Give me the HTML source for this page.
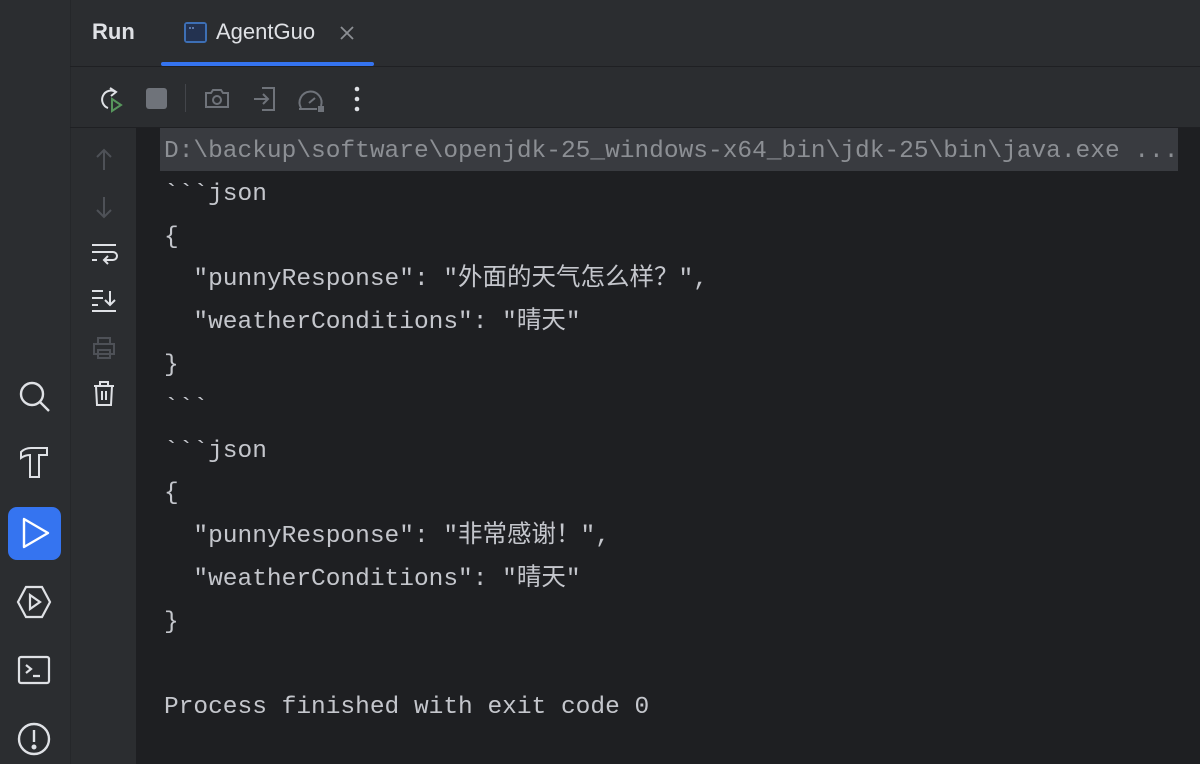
<!DOCTYPE html>
<html><head><meta charset="utf-8"><style>
html,body{margin:0;padding:0}
body{width:1200px;height:764px;background:#2b2d30;position:relative;overflow:hidden;font-family:"Liberation Sans",sans-serif}
.abs{position:absolute}
.vline{position:absolute;left:70px;top:0;width:1px;height:764px;background:#25272a}
.hline{position:absolute;left:70px;width:1130px;height:1px;background:#1f2023}
.console{position:absolute;left:136px;top:128px;width:1064px;height:636px;background:#1e1f22}
pre{margin:0;position:absolute;left:164px;top:131px;font-family:"Liberation Mono","Noto Sans CJK SC",monospace;font-size:24.5px;line-height:42.8px;color:#c4c6cc}
.hl{position:absolute;left:160px;top:128px;width:1018px;height:43px;background:#393b40}
svg{position:absolute;overflow:visible}
</style></head><body>
<div class="vline"></div>
<div class="hline" style="top:66px"></div>
<div class="abs" style="left:92px;top:19px;font-size:22px;color:#dfe1e5;font-weight:bold">Run</div>
<svg style="left:184px;top:22px" width="24" height="22"><rect x="1" y="1" width="21" height="19" rx="2" fill="none" stroke="#3d6fb5" stroke-width="2"/><rect x="2" y="2" width="19" height="17" fill="#233250"/><circle cx="6" cy="6" r="1" fill="#6e8fc7"/><circle cx="9" cy="6" r="1" fill="#6e8fc7"/></svg>
<div class="abs" style="left:216px;top:19px;font-size:22px;color:#dfe1e5">AgentGuo</div>
<svg style="left:340px;top:26px" width="14" height="14"><path d="M1 1L13 13M13 1L1 13" stroke="#8c8f94" stroke-width="1.8"/></svg>
<div class="abs" style="left:161px;top:62px;width:213px;height:4px;border-radius:2px;background:#3574f0"></div>
<svg style="left:96px;top:86px" width="30" height="28"><path d="M20 6A9 9 0 1 0 12 22" fill="none" stroke="#dfe1e5" stroke-width="2"/><path d="M14 2L20 6L15 10" fill="none" stroke="#dfe1e5" stroke-width="2"/><path d="M16 13L25 19L16 25Z" fill="none" stroke="#57965c" stroke-width="2"/></svg>
<div class="abs" style="left:146px;top:88px;width:21px;height:21px;border-radius:3px;background:#6f737a"></div>
<div class="abs" style="left:185px;top:84px;width:1px;height:28px;background:#43454a"></div>
<svg style="left:204px;top:86px" width="26" height="24" fill="none" stroke="#6f737a" stroke-width="2"><path d="M2 7h5l2-3h8l2 3h5v14H2Z"/><circle cx="13" cy="14" r="4"/></svg>
<svg style="left:252px;top:86px" width="26" height="26" fill="none" stroke="#6f737a" stroke-width="2"><path d="M10 2h12v22H10M2 13h14M11 8l5 5-5 5"/></svg>
<svg style="left:297px;top:88px" width="30" height="26" fill="none" stroke="#6f737a" stroke-width="2"><path d="M4 20A11 11 0 1 1 24 18M2 21h18M12 15l6-5"/><rect x="22" y="19" width="4" height="4" fill="#6f737a"/></svg>
<svg style="left:354px;top:86px" width="6" height="26" fill="#dfe1e5"><circle cx="3" cy="3" r="2.3"/><circle cx="3" cy="13" r="2.3"/><circle cx="3" cy="23" r="2.3"/></svg>
<div class="hline" style="top:127px;background:#1f2023"></div>
<div class="console"></div>
<div class="hl"></div>
<svg style="left:94px;top:148px" width="20" height="24" fill="none" stroke="#4e5157" stroke-width="2"><path d="M10 22V2M3 9l7-7 7 7"/></svg>
<svg style="left:94px;top:195px" width="20" height="24" fill="none" stroke="#4e5157" stroke-width="2"><path d="M10 2v20M3 15l7 7 7-7"/></svg>
<svg style="left:91px;top:243px" width="26" height="24" fill="none" stroke="#dfe1e5" stroke-width="2"><path d="M1 2h24M1 9h21a4 4 0 0 1 0 8h-8M17 13l-4 4 4 4M1 17h5"/></svg>
<svg style="left:91px;top:289px" width="26" height="24" fill="none" stroke="#dfe1e5" stroke-width="2"><path d="M1 2h11M1 9h11M1 16h6M19 2v14M14 11l5 5 5-5M1 22h24"/></svg>
<svg style="left:92px;top:336px" width="24" height="24" fill="none" stroke="#4e5157" stroke-width="2"><path d="M6 8V2h12v6M2 8h20v10H2ZM6 14h12v8H6Z"/></svg>
<svg style="left:93px;top:381px" width="22" height="26" fill="none" stroke="#dfe1e5" stroke-width="2"><path d="M1 5h20M7 5V1h8v4M3 5l1 19h14l1-19M9 10v9M13 10v9"/></svg>
<svg style="left:18px;top:380px" width="34" height="34" fill="none" stroke="#dfe1e5" stroke-width="2.4"><circle cx="14" cy="14" r="11"/><path d="M22 22l9 9"/></svg>
<svg style="left:17px;top:446px" width="34" height="36" fill="none" stroke="#dfe1e5" stroke-width="2"><path d="M4 6Q8 2 14 2H30V9H22V31H13V9Q8 9 4 12Z"/></svg>
<div class="abs" style="left:8px;top:507px;width:53px;height:53px;border-radius:9px;background:#3574f0"></div>
<svg style="left:22px;top:517px" width="30" height="32" fill="none" stroke="#fff" stroke-width="2.4"><path d="M2 2l24 14L2 30Z" stroke-linejoin="round"/></svg>
<svg style="left:16px;top:585px" width="36" height="34" fill="none" stroke="#dfe1e5" stroke-width="2.2"><path d="M10 2h16l8 15-8 15H10L2 17Z"/><path d="M14 10l10 7-10 7Z"/></svg>
<svg style="left:18px;top:656px" width="34" height="30" fill="none" stroke="#dfe1e5" stroke-width="2.2"><rect x="1" y="1" width="30" height="26" rx="2"/><path d="M8 9l5 4-5 4M15 20h7"/></svg>
<svg style="left:17px;top:722px" width="36" height="36" fill="none" stroke="#dfe1e5" stroke-width="2.4"><circle cx="17" cy="17" r="15"/><path d="M17 8v12"/><circle cx="17" cy="25" r="1.3" fill="#dfe1e5"/></svg>
<pre><span style="color:#8c8f94">D:\backup\software\openjdk-25_windows-x64_bin\jdk-25\bin\java.exe ...</span>
&#96;&#96;&#96;json
{
  "punnyResponse": "外面的天气怎么样？",
  "weatherConditions": "晴天"
}
&#96;&#96;&#96;
&#96;&#96;&#96;json
{
  "punnyResponse": "非常感谢！",
  "weatherConditions": "晴天"
}

Process finished with exit code 0</pre>
</body></html>
